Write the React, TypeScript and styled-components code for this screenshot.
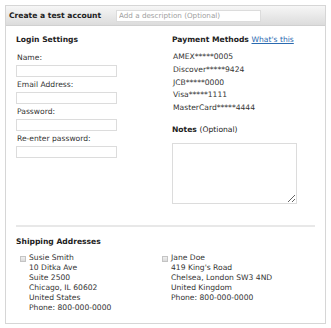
import React from "react";
import styled, { createGlobalStyle } from "styled-components";

const Global = createGlobalStyle`
  html, body { margin: 0; padding: 0; background: #fff; }
  body { font-family: "DejaVu Sans", Verdana, sans-serif; font-size: 7.6px; color: #333; }
  * { box-sizing: border-box; }
`;

const Panel = styled.div`
  margin: 5px 0 0 5px;
  width: 321px;
  height: 319px;
  border: 1px solid #d6d6d6;
  background: #fff;
`;

const Header = styled.div`
  height: 20px;
  display: flex;
  align-items: center;
  gap: 12px;
  padding-left: 3px;
  background: linear-gradient(#f6f6f6, #dcdcdc);
  border-bottom: 1px solid #d0d0d0;
`;

const Title = styled.div`
  font-weight: bold;
  color: #222;
  font-size: 7.6px;
  width: 95px;
  white-space: nowrap;
`;

const DescInput = styled.input`
  width: 145px;
  height: 12px;
  border: 1px solid #dcdcdc;
  background: #fff;
  padding: 0 2px;
  font-family: inherit;
  font-size: 7.2px;
  outline: none;
  &::placeholder { color: #a0a0a0; }
`;

const Body = styled.div`
  padding: 8px 10px 0 10px;
`;

const Columns = styled.div`
  display: grid;
  grid-template-columns: 156px 1fr;
`;

const Column = styled.div`
  display: flex;
  flex-direction: column;
`;

const Heading = styled.div<{ $mb?: number }>`
  font-weight: bold;
  line-height: 12px;
  color: #222;
  margin-bottom: ${(p) => p.$mb ?? 0}px;
  white-space: nowrap;
`;

const Light = styled.span`
  font-weight: normal;
`;

const Link = styled.a`
  font-weight: normal;
  color: #2a6ab0;
  text-decoration: underline;
`;

const Label = styled.label`
  display: block;
  line-height: 12px;
  margin-bottom: 1px;
  padding-left: 1px;
`;

const Field = styled.input`
  display: block;
  width: 101px;
  height: 12px;
  margin-bottom: 2px;
  border: 1px solid #dcdcdc;
  background: #fff;
  outline: none;
`;

const CardList = styled.div`
  margin-top: 5px;
  padding-left: 1px;
`;

const Card = styled.div`
  line-height: 12.8px;
`;

const NotesHeading = styled(Heading)`
  margin-top: 9px;
  margin-bottom: 7px;
`;

const Notes = styled.textarea`
  display: block;
  width: 125px;
  height: 61px;
  border: 1px solid #dcdcdc;
  outline: none;
  resize: both;
`;

const Separator = styled.hr`
  border: 0;
  height: 2px;
  background: #e8e8e8;
  margin: 21px 0 9px 0;
`;

const Addresses = styled.div`
  display: grid;
  grid-template-columns: 142px 1fr;
  padding-left: 4px;
  margin-top: 5px;
`;

const Address = styled.div`
  display: flex;
  align-items: flex-start;
  gap: 3px;
`;

const Check = styled.input`
  appearance: none;
  width: 6px;
  height: 6px;
  margin: 3px 0 0 0;
  border: 1px solid #c4c4c4;
  background: linear-gradient(#f0f0f0, #dadada);
  flex: none;
`;

const Lines = styled.div`
  line-height: 10px;
  color: #333;
`;

const cards = ["AMEX*****0005", "Discover*****9424", "JCB*****0000", "Visa*****1111", "MasterCard*****4444"];

const addresses = [
  ["Susie Smith", "10 Ditka Ave", "Suite 2500", "Chicago, IL 60602", "United States", "Phone: 800-000-0000"],
  ["Jane Doe", "419 King's Road", "Chelsea, London SW3 4ND", "United Kingdom", "Phone: 800-000-0000"],
];

export default function App() {
  return (
    <>
      <Global />
      <Panel>
        <Header>
          <Title>Create a test account</Title>
          <DescInput placeholder="Add a description (Optional)" />
        </Header>
        <Body>
          <Columns>
            <Column>
              <Heading $mb={6}>Login Settings</Heading>
              <Label>Name:</Label>
              <Field />
              <Label>Email Address:</Label>
              <Field />
              <Label>Password:</Label>
              <Field type="password" />
              <Label>Re-enter password:</Label>
              <Field type="password" />
            </Column>
            <Column>
              <Heading>
                Payment Methods <Link href="#">What's this</Link>
              </Heading>
              <CardList>
                {cards.map((c) => (
                  <Card key={c}>{c}</Card>
                ))}
              </CardList>
              <NotesHeading>
                Notes <Light>(Optional)</Light>
              </NotesHeading>
              <Notes />
            </Column>
          </Columns>
          <Separator />
          <Heading>Shipping Addresses</Heading>
          <Addresses>
            {addresses.map((a) => (
              <Address key={a[0]}>
                <Check type="checkbox" />
                <Lines>
                  {a.map((l) => (
                    <div key={l}>{l}</div>
                  ))}
                </Lines>
              </Address>
            ))}
          </Addresses>
        </Body>
      </Panel>
    </>
  );
}
